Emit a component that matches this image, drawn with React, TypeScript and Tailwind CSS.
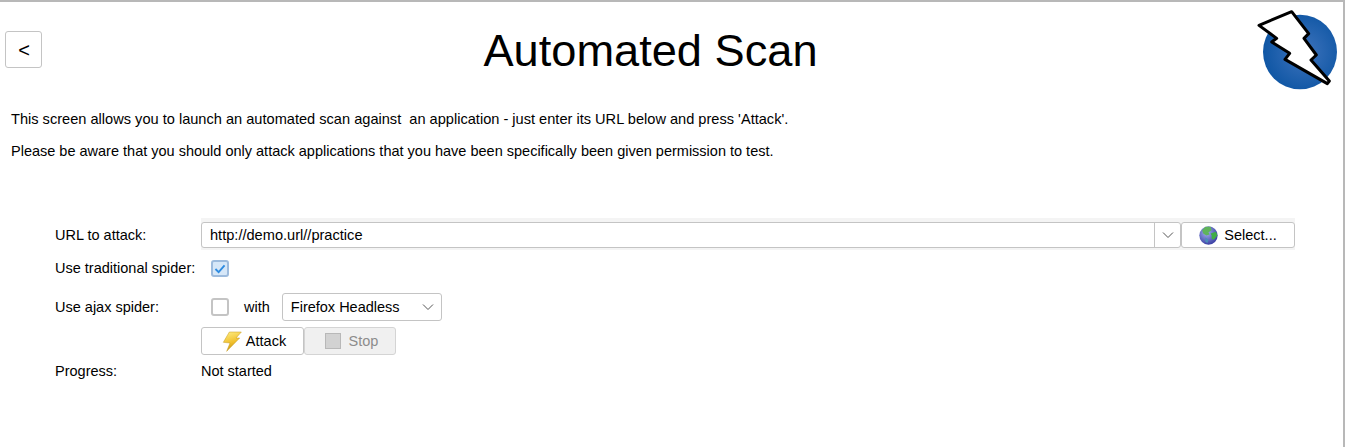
import React from "react";

function Logo() {
  return (
    <svg width="81" height="81" viewBox="51 30 243 243" className="block">
      <defs>
        <radialGradient id="zapBlue" cx="0.55" cy="0.5" r="0.55">
          <stop offset="0" stopColor="#3f74bd" />
          <stop offset="1" stopColor="#0f56a4" />
        </radialGradient>
      </defs>
      <ellipse cx="180" cy="156" rx="111" ry="112" fill="url(#zapBlue)" />
      <path
        d="M57 76 L155 35 L206 101 L192 115 L229 165 L213 180 L268 243 L262 251 L135 178 L149 160 L95 126 L110 115 Z"
        fill="#fff"
        stroke="#000"
        strokeWidth="9"
        strokeLinejoin="round"
      />
    </svg>
  );
}

function Chevron() {
  return (
    <svg width="12" height="7" viewBox="0 0 12 7" fill="none" stroke="#555" strokeWidth="1">
      <path d="M1 0.5 L6 5.5 L11 0.5" />
    </svg>
  );
}

function Globe() {
  return (
    <svg width="19" height="19" viewBox="0 0 18 18" className="block">
      <defs>
        <radialGradient id="globeFill" cx="0.4" cy="0.35" r="0.7">
          <stop offset="0" stopColor="#a3b2ee" />
          <stop offset="1" stopColor="#34389f" />
        </radialGradient>
      </defs>
      <circle cx="9" cy="9" r="8.7" fill="url(#globeFill)" />
      <path d="M6 0.8 L11 0.8 L12 4 L9 6 L10 8 L7 9 L4 7 L3 4 Z" fill="#5fb45a" />
      <path d="M11 7 L16 5.5 L17.4 9 L14 13 L12 12 L12 9 Z" fill="#3fae46" />
      <path d="M6 11 L9 13 L8 16 L6 15 Z" fill="#4a8fb8" />
    </svg>
  );
}

function Bolt() {
  return (
    <svg width="20" height="21" viewBox="60 26 60 63" className="block">
      <defs>
        <linearGradient id="boltFill" x1="0.3" y1="0" x2="0.6" y2="1">
          <stop offset="0" stopColor="#fde97a" />
          <stop offset="0.55" stopColor="#f0bf2c" />
          <stop offset="1" stopColor="#b98a12" />
        </linearGradient>
      </defs>
      <path d="M82 29 L118 29 L102 47 L113 47 L74 87 L84 62 L64 60 Z" fill="url(#boltFill)" stroke="#c49a1e" strokeWidth="1.5" />
    </svg>
  );
}

export default function App() {
  return (
    <div className="h-[447px] w-[1348px] overflow-hidden bg-white font-['Liberation_Sans',Arial,sans-serif] text-[14.5px] text-black">
      <div className="h-[447px] w-[1345px] border-t-2 border-r-2 border-[#b8b8b8] px-[5px]">
        <header className="flex h-[88px] items-start pt-[8px]">
          <button className="mt-[21px] flex h-[37px] w-[37px] shrink-0 items-center justify-center rounded-[3px] border border-[#c4c4c4] bg-white pl-px text-[20px] leading-none">
            &lt;
          </button>
          <h1 className="mt-[14px] flex-1 pl-[2px] text-center text-[45.2px] leading-[53px] font-normal">Automated Scan</h1>
          <Logo />
        </header>

        <p className="mt-[21px] ml-[6px] text-[14.6px] leading-[16px]">
          This screen allows you to launch an automated scan against&nbsp; an application - just enter its URL below and press 'Attack'.
        </p>
        <p className="mt-[16px] ml-[6px] leading-[16px]">
          Please be aware that you should only attack applications that you have been specifically been given permission to test.
        </p>

        <div className="mt-[59px] ml-[50px] flex flex-col">
          <div className="flex h-[32px] items-center">
            <span className="w-[146px] shrink-0 pt-[4px]">URL to attack:</span>
            <div className="flex h-[32px] w-[1094px] items-start bg-[#f4f4f4] pt-[4px]">
              <div className="flex h-[26px] w-[980px] items-center rounded-[3px] border border-[#c4c4c4] bg-white">
                <span className="flex-1 pt-px pl-[8px] text-[14.6px]">http://demo.url//practice</span>
                <span className="flex h-full w-[26px] items-center justify-center border-l border-[#c4c4c4]">
                  <Chevron />
                </span>
              </div>
              <button className="flex h-[26px] w-[114px] items-center justify-center gap-[6px] rounded-[3px] border border-[#c4c4c4] bg-white">
                <Globe />
                <span className="pt-px">Select...</span>
              </button>
            </div>
          </div>

          <div className="mt-[5px] flex h-[27px] items-center">
            <span className="w-[146px] shrink-0 pt-px">Use traditional spider:</span>
            <span className="ml-[10px] flex h-[17px] w-[18px] items-center justify-center rounded-[3px] border-2 border-[#9dbbdd] bg-[#d6e7f8]">
              <svg width="12" height="10" viewBox="0 0 13 11" fill="none" stroke="#2e8be0" strokeWidth="2">
                <path d="M1.5 5.5 L5 9 L11.5 1.5" />
              </svg>
            </span>
          </div>

          <div className="mt-[11px] flex h-[28px] items-center">
            <span className="w-[146px] shrink-0 pt-px">Use ajax spider:</span>
            <span className="ml-[10px] h-[18px] w-[18px] rounded-[3px] border-2 border-[#c4c4c4] bg-white" />
            <span className="ml-[15px] pt-px">with</span>
            <div className="ml-[12px] flex h-[28px] w-[160px] items-center justify-between rounded-[3px] border border-[#c4c4c4] bg-white pr-[7px] pl-[8px]">
              <span className="pt-px">Firefox Headless</span>
              <Chevron />
            </div>
          </div>

          <div className="mt-[6px] ml-[146px] flex h-[28px]">
            <button className="flex h-[28px] w-[103px] items-center justify-center gap-[4px] rounded-[3px] border border-[#c4c4c4] bg-white pl-[3px]">
              <Bolt />
              <span className="pt-px">Attack</span>
            </button>
            <button className="flex h-[28px] w-[92px] items-center justify-center gap-[8px] rounded-[3px] border border-[#d4d4d4] bg-[#f0f0f0] pl-[3px] text-[#8c8c8c]">
              <span className="h-[16px] w-[16px] border border-[#b8b8b8] bg-[#d2d2d2]" />
              <span className="pt-px">Stop</span>
            </button>
          </div>

          <div className="mt-[7px] flex h-[18px] items-center">
            <span className="w-[146px] shrink-0 pt-px">Progress:</span>
            <span className="pt-px">Not started</span>
          </div>
        </div>
      </div>
    </div>
  );
}
